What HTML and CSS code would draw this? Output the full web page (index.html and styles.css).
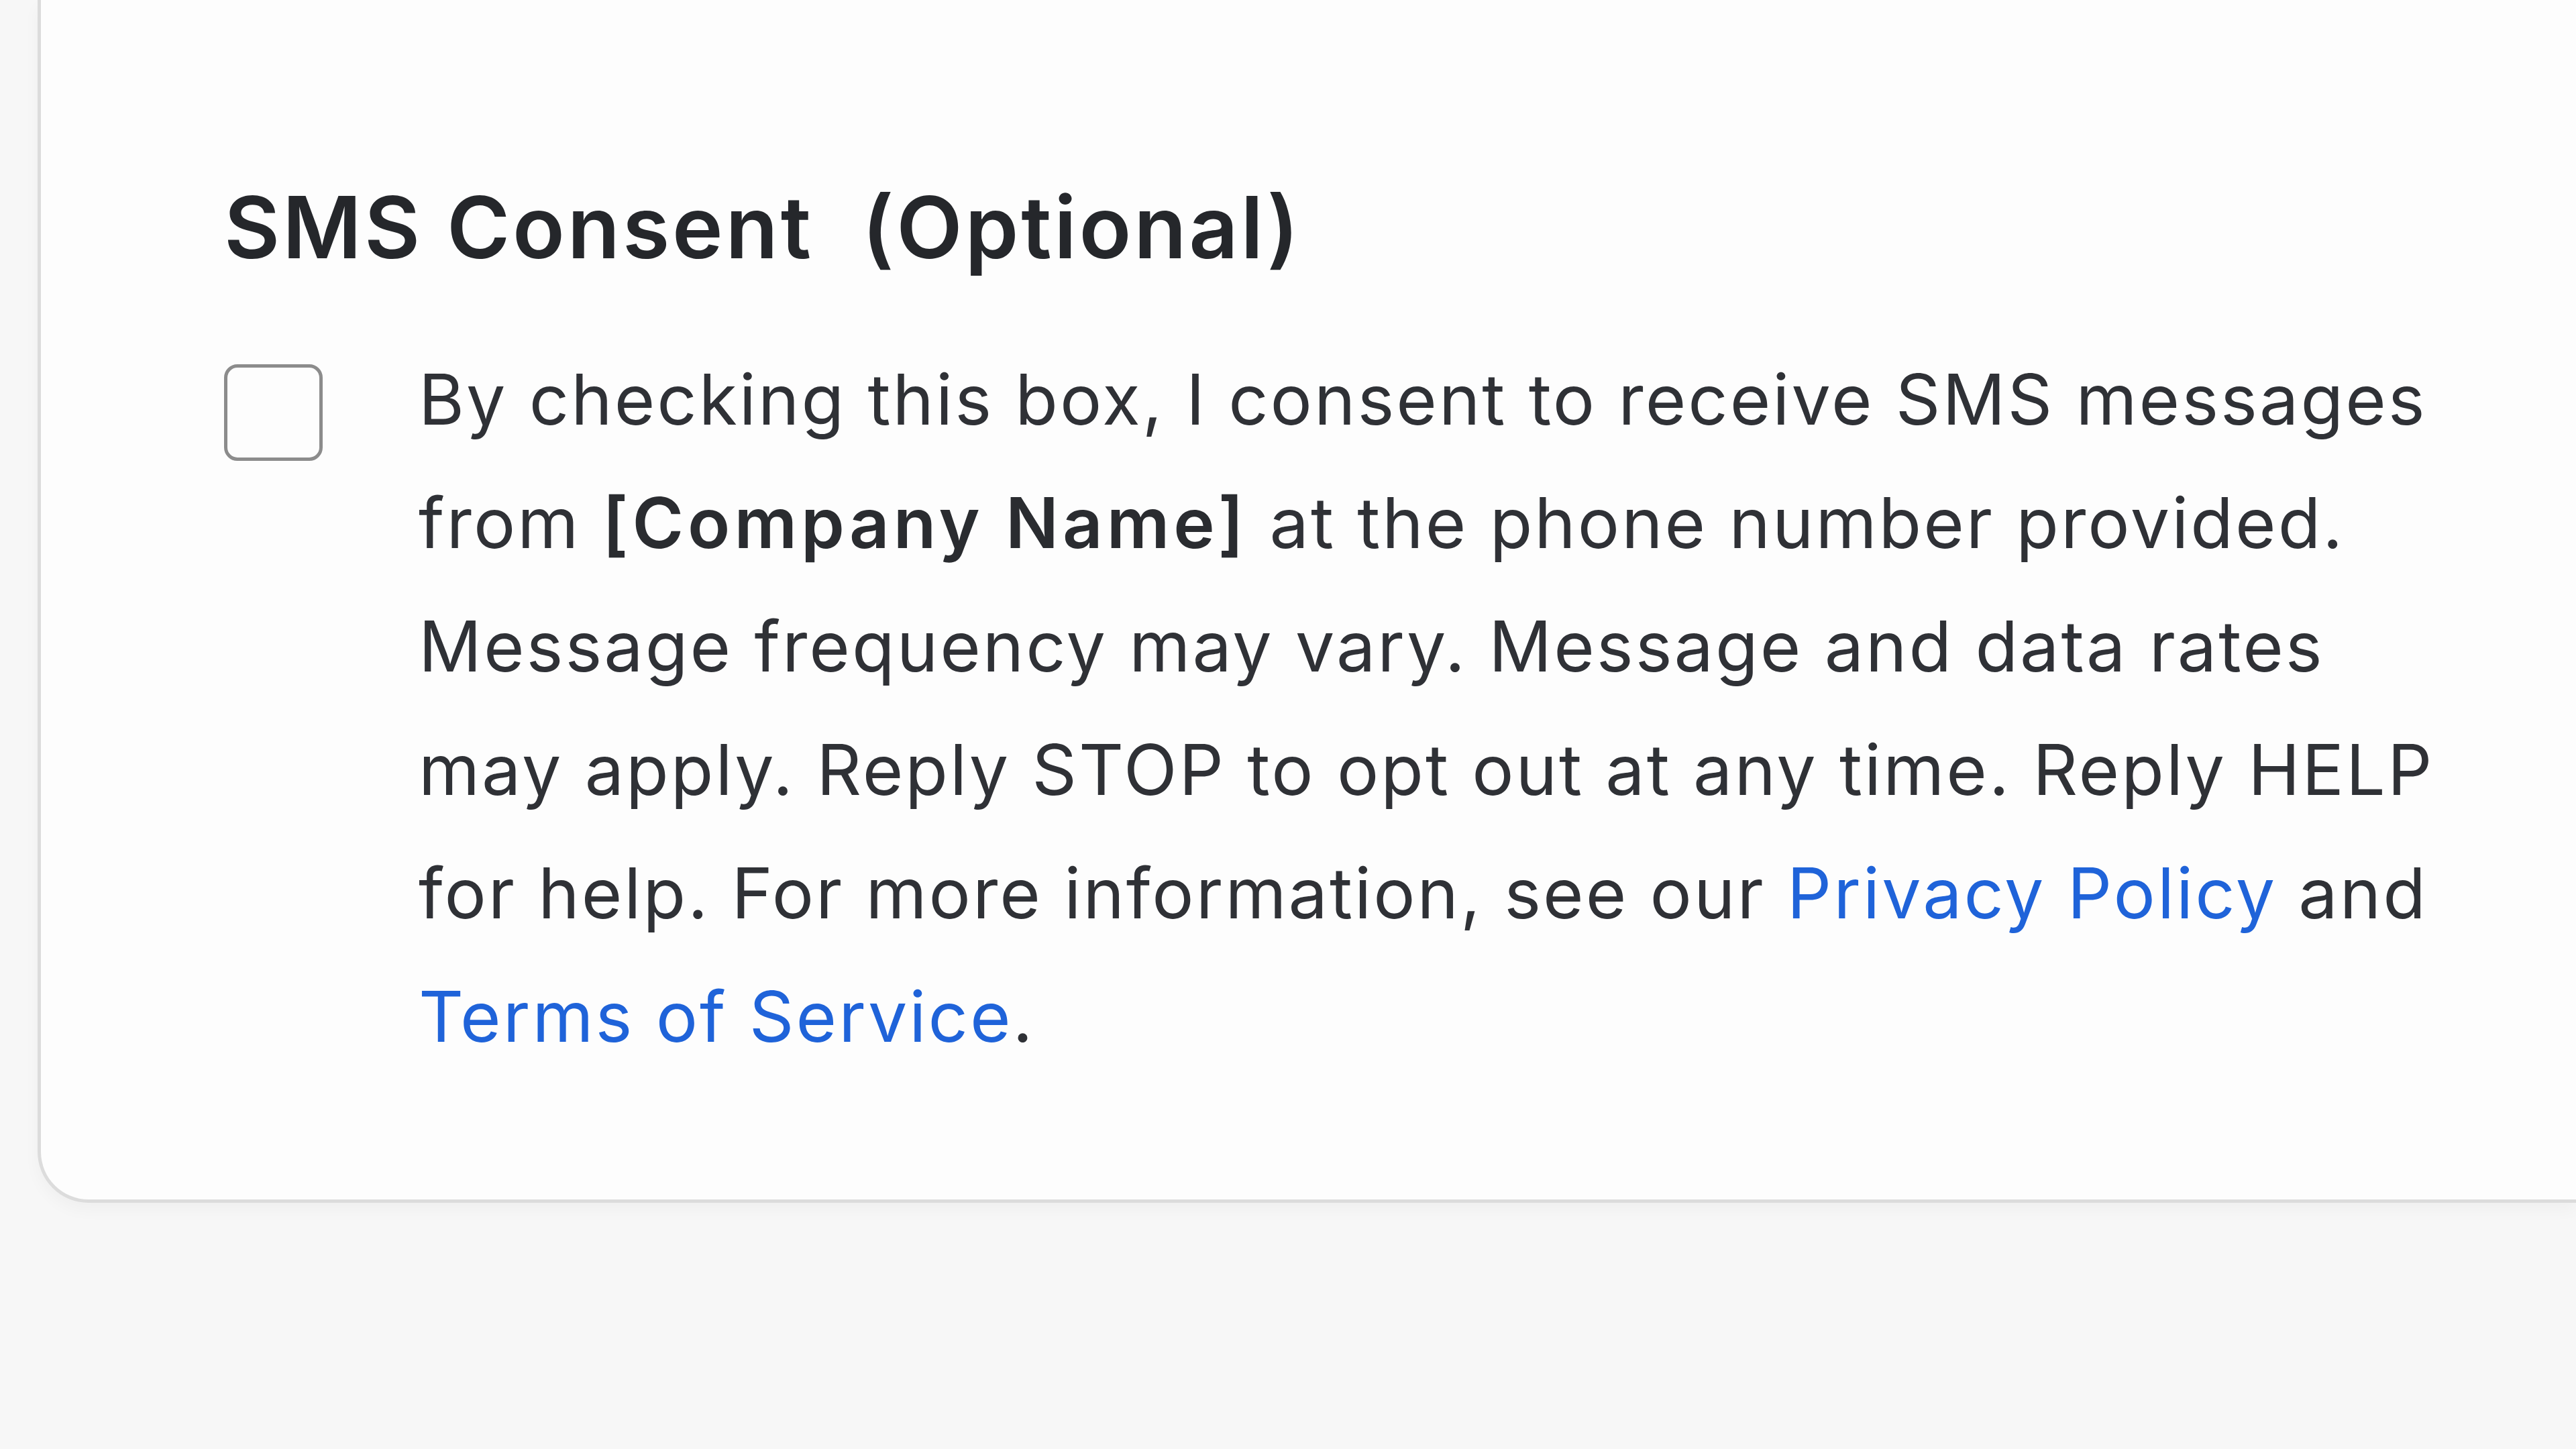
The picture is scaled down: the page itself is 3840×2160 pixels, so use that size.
FILE: index.html
```html
<!DOCTYPE html>
<html lang="en">
<head>
<meta charset="utf-8">
<title>SMS Consent</title>
<link rel="stylesheet" href="styles.css">
</head>
<body>
<main class="page">
  <section class="card">
    <h2 class="title">SMS Consent&nbsp; (Optional)</h2>
    <label class="consent">
      <span class="checkbox" aria-hidden="true"></span>
      <span class="consent-text">By checking this box, I consent to receive SMS messages<br>from <strong>[Company Name]</strong> at the phone number provided.<br>Message frequency may vary. Message and data rates<br>may apply. Reply STOP to opt out at any time. Reply HELP<br>for help. For more information, see our <a href="#" class="link">Privacy Policy</a> and<br><a href="#" class="link">Terms of Service</a>.</span>
    </label>
  </section>
</main>
</body>
</html>
```

FILE: styles.css
```css
html, body {
  margin: 0;
  padding: 0;
  background: #f7f7f7;
  overflow: hidden;
}

.page {
  width: 3840px;
  height: 2160px;
  padding-left: 56px;
  box-sizing: border-box;
  font-family: Inter, "Noto Sans", sans-serif;
}

.card {
  height: 1793px;
  box-sizing: border-box;
  background: #fdfdfd;
  border-left: 5px solid #dcdcdc;
  border-bottom: 5px solid #dcdcdc;
  border-bottom-left-radius: 76px;
  box-shadow: 0 10px 24px rgba(0, 0, 0, 0.035);
  padding: 262px 0 0 273px;
}

.title {
  margin: 0;
  font-size: 128px;
  line-height: 154px;
  font-weight: 600;
  color: #25272b;
  letter-spacing: 3.8px;
  white-space: pre;
}

.consent {
  display: flex;
  align-items: flex-start;
  gap: 143px;
  margin-top: 87px;
}

.checkbox {
  flex: none;
  width: 147px;
  height: 144px;
  margin-top: 40px;
  box-sizing: border-box;
  border: 5px solid #8c8c8c;
  border-radius: 20px;
  background: #fdfdfd;
}

.consent-text {
  font-size: 104px;
  line-height: 184px;
  color: #2f3136;
  letter-spacing: 3px;
  white-space: nowrap;
}

.consent-text strong {
  font-weight: 600;
  color: #2a2c30;
  letter-spacing: 6px;
}

.link {
  color: #1f63d9;
  text-decoration: none;
}
```
